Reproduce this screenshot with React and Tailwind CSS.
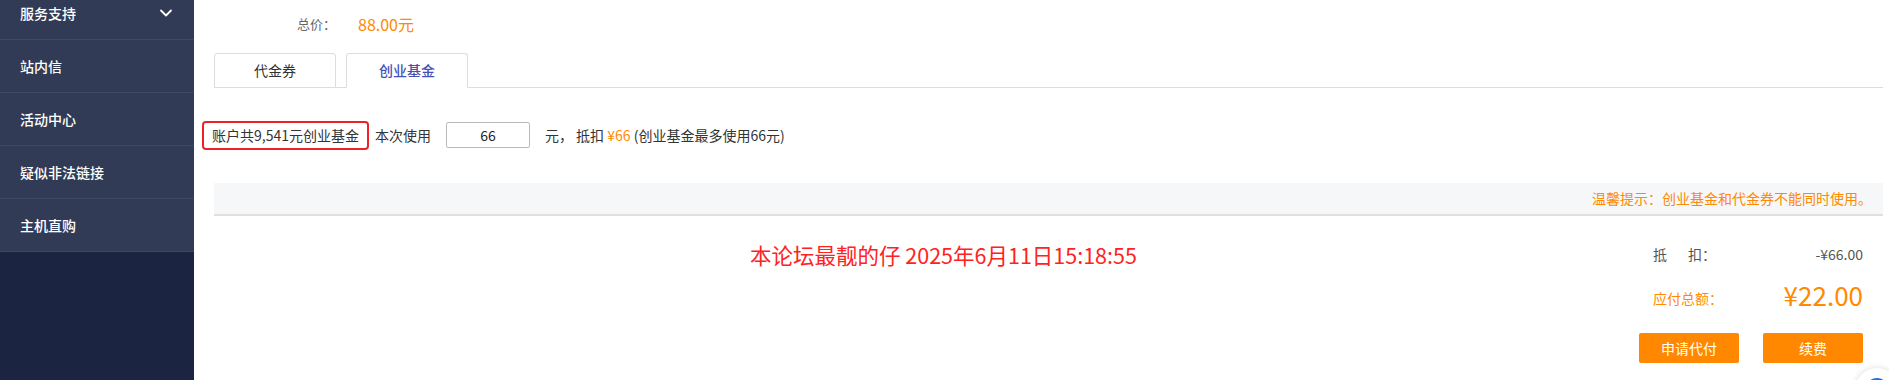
import React, { useState } from 'react';

const menu = ['服务支持', '站内信', '活动中心', '疑似非法链接', '主机直购'];

const Sidebar = () => (
    <aside className="w-[194px] shrink-0 bg-[#1b2440] h-full overflow-hidden">
        <div className="-mt-[13px]">
            {menu.map((m, i) => (
                <div key={m} className="h-[53px] flex items-center justify-between pl-5 pr-[21px] bg-[#323b55] border-b border-[#3d4766] text-white text-[14px] font-medium">
                    <span>{m}</span>
                    {i === 0 && (
                        <svg width="14" height="14" viewBox="0 0 14 14" fill="none" stroke="white" strokeWidth="1.8" strokeLinecap="round" strokeLinejoin="round">
                            <path d="M2 4.5 L7 9.5 L12 4.5" />
                        </svg>
                    )}
                </div>
            ))}
        </div>
    </aside>
);

export default function App() {
    const [tab, setTab] = useState('fund');
    const [amount, setAmount] = useState('66');

    return (
        <div className="flex w-full h-[380px] overflow-hidden bg-white" style={{ fontFamily: '"Noto Sans CJK SC", "Noto Sans", sans-serif' }}>
            <Sidebar />
            <main className="flex-1 relative pl-5 pr-[6px] text-[14px] text-[#333]">
                <div className="h-12 flex items-center">
                    <span className="w-[122px] text-right text-[#666] text-[13px]">总价：</span>
                    <span className="ml-[22px] text-[16px] text-[#ff8a00]">88.00元</span>
                </div>

                <div className="mt-[5px] flex items-end gap-[10px] border-b border-[#dddddd]">
                    <button onClick={() => setTab('coupon')} className={`w-[122px] h-[35px] -mb-px border border-[#dddddd] rounded-t-[3px] text-[14px] bg-white ${tab === 'coupon' ? 'border-b-white text-[#4352b8]' : 'text-[#333]'}`}>代金券</button>
                    <button onClick={() => setTab('fund')} className={`w-[122px] h-[35px] -mb-px border border-[#dddddd] rounded-t-[3px] text-[14px] bg-white ${tab === 'fund' ? 'border-b-white text-[#4352b8] font-medium' : 'text-[#333]'}`}>创业基金</button>
                </div>

                <div className="mt-[32px] ml-[-12px] h-[30px] flex items-center">
                    <span className="h-[29px] flex items-center px-[8px] border-2 border-[#ee2222] rounded-[4px] text-[#333]">账户共9,541元创业基金</span>
                    <span className="ml-[6px]">本次使用</span>
                    <input value={amount} onChange={e => setAmount(e.target.value)} className="ml-[15px] w-[84px] h-[26px] border border-[#bbbbbb] rounded-[2px] text-center text-[14px] text-[#222] outline-none" />
                    <span className="ml-[15px]">元，&nbsp;抵扣 <span className="text-[#ff8a00]">¥66</span> (创业基金最多使用66元)</span>
                </div>

                <div className="mt-[33px] h-[33px] bg-[#f6f7f9] border-b-2 border-[#e0e0e0] flex items-center justify-end pr-[11px] text-[14px] text-[#ff8a00]">
                    温馨提示：创业基金和代金券不能同时使用。
                </div>

                <div className="flex justify-between">
                    <div className="pl-[536px] pt-[26px] text-[21.5px] text-[#ff2222] leading-[26px]">本论坛最靓的仔 2025年6月11日15:18:55</div>
                    <div className="w-[224px] mr-[20px] pt-[28px] text-[14px]">
                        <div className="h-5 flex items-center justify-between pl-[14px] text-[#555]">
                            <span className="w-[63px] flex justify-between"><span>抵</span><span>扣：</span></span>
                            <span>-¥66.00</span>
                        </div>
                        <div className="mt-[13px] h-[36px] flex items-center justify-between pl-[14px] text-[#ff8a00]">
                            <span className="pt-[6px]">应付总额：</span>
                            <span className="text-[26px] leading-none">¥22.00</span>
                        </div>
                        <div className="mt-[20px] flex justify-between">
                            <button className="w-[100px] h-[30px] rounded-[2px] bg-[#ff8800] text-white text-[14px]">申请代付</button>
                            <button className="w-[100px] h-[30px] rounded-[2px] bg-[#ff8800] text-white text-[14px]">续费</button>
                        </div>
                    </div>
                </div>

                <div className="absolute right-[-10px] top-[368px] w-[44px] h-[44px] rounded-full bg-white shadow-[0_0_6px_rgba(0,0,0,0.15)] flex items-center justify-center">
                    <div className="w-[24px] h-[24px] rounded-full bg-[#1e6fe0]" />
                </div>
            </main>
        </div>
    );
}
